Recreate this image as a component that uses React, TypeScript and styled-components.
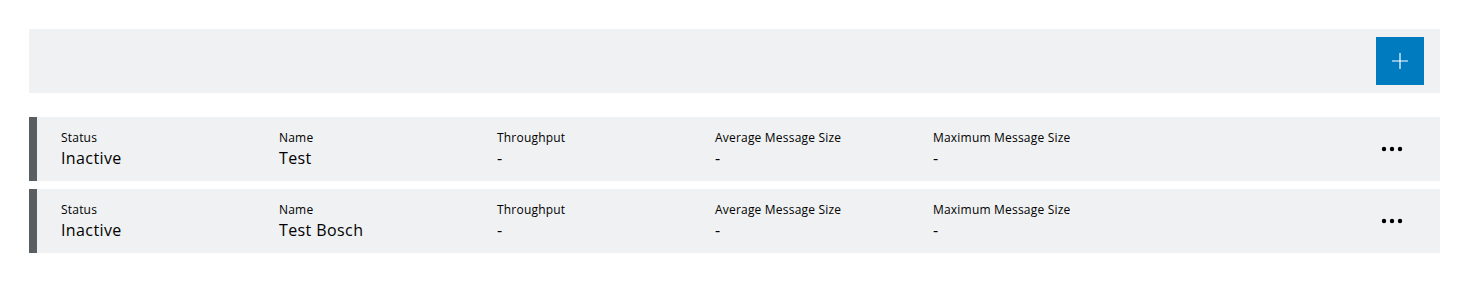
import React from "react";
import styled, { createGlobalStyle } from "styled-components";

const Global = createGlobalStyle`
  html, body { margin: 0; padding: 0; background: #fff; }
  body { font-family: "Open Sans", "Liberation Sans", Arial, sans-serif; color: #000; }
`;

const Page = styled.div`
  padding: 29px 31px 29px 29px;
  display: flex;
  flex-direction: column;
`;

const Toolbar = styled.div`
  height: 64px;
  background: #eff1f2;
  display: flex;
  align-items: center;
  justify-content: flex-end;
  padding: 0 16px;
  box-sizing: border-box;
`;

const AddButton = styled.button`
  width: 48px;
  height: 48px;
  border: none;
  padding: 0;
  background: #007bc0;
  display: flex;
  align-items: center;
  justify-content: center;
  cursor: pointer;
`;

const List = styled.div`
  margin-top: 24px;
  display: flex;
  flex-direction: column;
  gap: 8px;
`;

const Row = styled.div`
  height: 64px;
  background: #eff1f2;
  border-left: 8px solid #595e62;
  box-sizing: border-box;
  display: flex;
  align-items: center;
  padding-left: 24px;
  padding-right: 24px;
`;

const Field = styled.div`
  width: 218px;
  display: flex;
  flex-direction: column;
  padding-top: 2px;
`;

const Label = styled.div`
  font-size: 12px;
  line-height: 16px;
  letter-spacing: 0.2px;
`;

const Value = styled.div`
  font-size: 16px;
  line-height: 24px;
  letter-spacing: 0.4px;
`;

const Spacer = styled.div`
  flex: 1;
`;

const MoreButton = styled.button`
  width: 48px;
  height: 48px;
  border: none;
  background: transparent;
  padding: 0;
  display: flex;
  align-items: center;
  justify-content: center;
`;

const rows = [
  { status: "Inactive", name: "Test" },
  { status: "Inactive", name: "Test Bosch" },
];

export default function App() {
  return (
    <>
      <Global />
      <Page>
        <Toolbar>
          <AddButton aria-label="Add">
            <svg width="18" height="18" viewBox="0 0 18 18">
              <path d="M9 1v16M1 9h16" stroke="#fff" strokeWidth="1.2" fill="none" />
            </svg>
          </AddButton>
        </Toolbar>
        <List>
          {rows.map((r, i) => (
            <Row key={i}>
              <Field>
                <Label>Status</Label>
                <Value>{r.status}</Value>
              </Field>
              <Field>
                <Label>Name</Label>
                <Value>{r.name}</Value>
              </Field>
              <Field>
                <Label>Throughput</Label>
                <Value>-</Value>
              </Field>
              <Field>
                <Label>Average Message Size</Label>
                <Value>-</Value>
              </Field>
              <Field>
                <Label>Maximum Message Size</Label>
                <Value>-</Value>
              </Field>
              <Spacer />
              <MoreButton aria-label="More">
                <svg width="22" height="6" viewBox="0 0 22 6">
                  <circle cx="3" cy="3" r="2.2" fill="#000" />
                  <circle cx="11" cy="3" r="2.2" fill="#000" />
                  <circle cx="19" cy="3" r="2.2" fill="#000" />
                </svg>
              </MoreButton>
            </Row>
          ))}
        </List>
      </Page>
    </>
  );
}
